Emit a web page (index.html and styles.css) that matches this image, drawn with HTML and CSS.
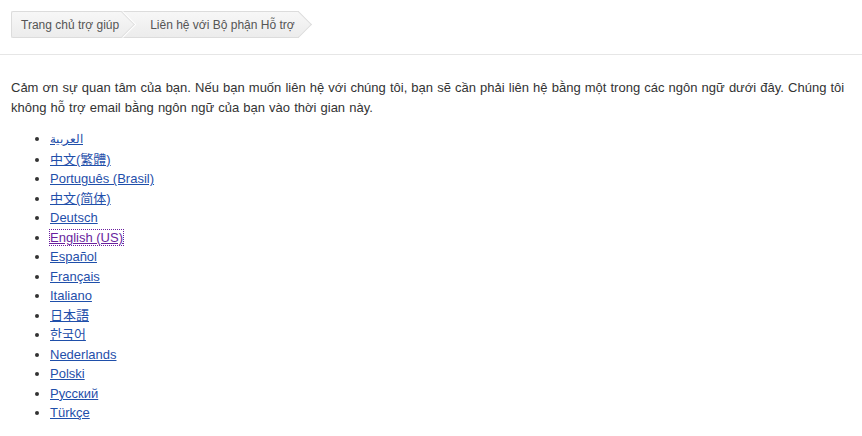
FILE: index.html
```html
<!DOCTYPE html>
<html lang="vi">
<head>
<meta charset="utf-8">
<title>Liên hệ với Bộ phận Hỗ trợ</title>
<link rel="stylesheet" href="styles.css">
</head>
<body>
<header class="top">
  <ol class="crumbs">
    <li class="crumb first"><a href="#">Trang chủ trợ giúp</a></li>
    <li class="crumb last"><a href="#">Liên hệ với Bộ phận Hỗ trợ</a></li>
  </ol>
</header>
<main class="content">
  <p class="intro">Cảm ơn sự quan tâm của bạn. Nếu bạn muốn liên hệ với chúng tôi, bạn sẽ cần phải liên hệ bằng một trong các ngôn ngữ dưới đây. Chúng tôi không hỗ trợ email bằng ngôn ngữ của bạn vào thời gian này.</p>
  <ul class="langs">
    <li><a href="#" lang="ar" class="ar">العربية</a></li>
    <li><a href="#" lang="zh-TW">中文(繁體)</a></li>
    <li><a href="#">Português (Brasil)</a></li>
    <li><a href="#" lang="zh-CN">中文(简体)</a></li>
    <li><a href="#">Deutsch</a></li>
    <li><a href="#" class="visited">English (US)</a></li>
    <li><a href="#">Español</a></li>
    <li><a href="#">Français</a></li>
    <li><a href="#">Italiano</a></li>
    <li><a href="#" lang="ja">日本語</a></li>
    <li><a href="#" lang="ko">한국어</a></li>
    <li><a href="#">Nederlands</a></li>
    <li><a href="#">Polski</a></li>
    <li><a href="#">Русский</a></li>
    <li><a href="#">Türkçe</a></li>
  </ul>
</main>
</body>
</html>
```
FILE: styles.css
```css
html, body {
  margin: 0;
  padding: 0;
  background: #fff;
}
body {
  font-family: "Liberation Sans", Arial, "Noto Sans CJK SC", sans-serif;
  font-size: 13px;
  color: #333;
}
.top {
  padding: 11px 11px 0;
  height: 43px;
  border-bottom: 1px solid #e6e6e6;
}
.crumbs {
  list-style: none;
  margin: 0;
  padding: 0;
  display: flex;
  height: 27px;
}
.crumb {
  position: relative;
  display: flex;
  align-items: center;
  height: 25px;
  border-top: 1px solid #dcdcdc;
  border-bottom: 1px solid #dcdcdc;
  background: linear-gradient(#f7f7f7, #ececec);
  font-size: 12px;
}
.crumb a {
  color: #555;
  text-decoration: none;
  position: relative;
  z-index: 2;
}
.crumb.first {
  border-left: 1px solid #dcdcdc;
  border-radius: 2px 0 0 2px;
  padding: 0 3px 0 9px;
}
.crumb.last {
  padding: 0 4px 0 28px;
}
.crumb::after {
  content: "";
  position: absolute;
  right: -9px;
  top: 3px;
  width: 18px;
  height: 18px;
  background: linear-gradient(135deg, #f7f7f7, #ececec);
  border-top: 1px solid #dcdcdc;
  border-right: 1px solid #dcdcdc;
  transform: rotate(45deg);
  z-index: 1;
}
.crumb.first::after {
  border-color: #e2e2e2;
  box-shadow: 1px -1px 0 #fff;
}
.content {
  padding: 0 11px;
}
.intro {
  margin: 23px 0 11px;
  line-height: 20px;
  word-spacing: 0.5px;
}
.langs {
  margin: 0;
  padding: 0 0 0 39px;
  line-height: 19.5px;
}
.langs a {
  color: #1f4faa;
}
.langs a.ar {
  font-size: 12px;
}
.langs a.visited {
  color: #6a1f9e;
  outline: 1px dotted #6a1f9e;
}
```
